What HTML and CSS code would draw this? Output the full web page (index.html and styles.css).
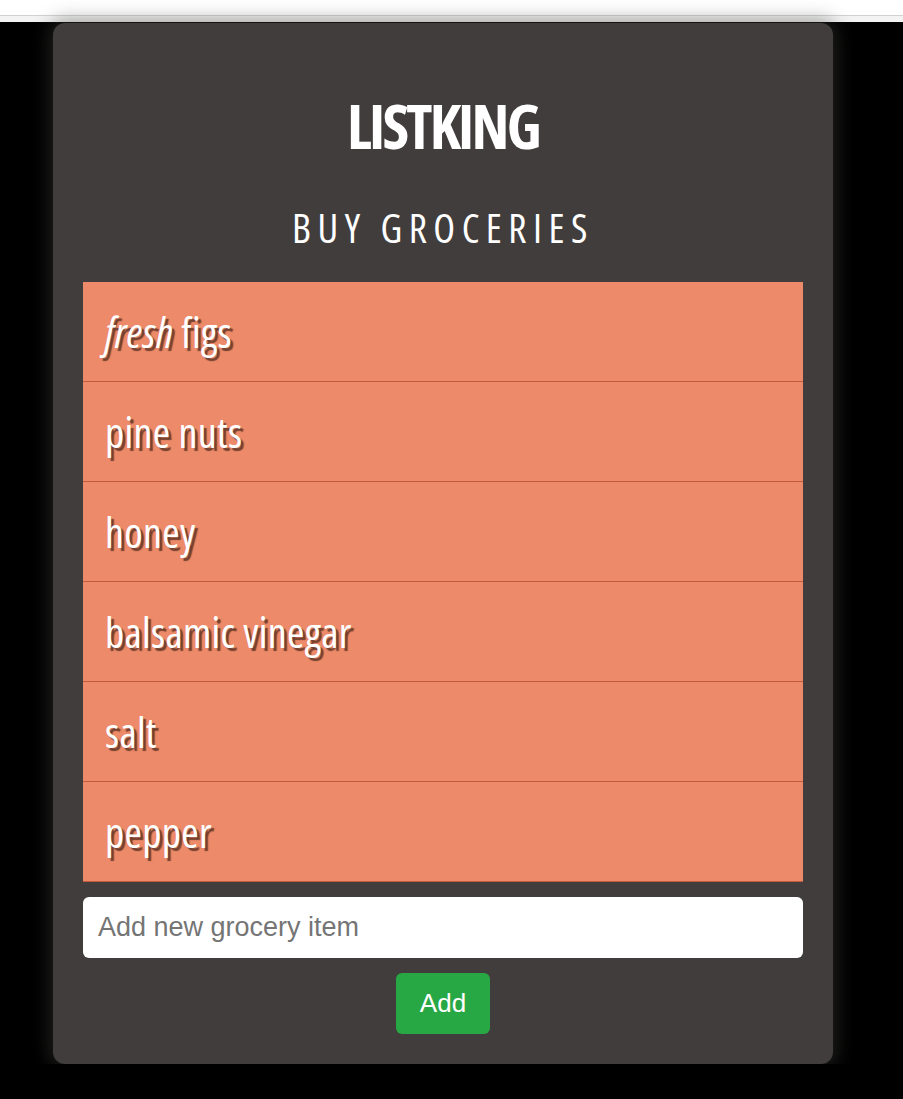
FILE: index.html
```html
<!DOCTYPE html>
<html lang="en">
<head>
    <meta charset="UTF-8">
    <meta name="viewport" content="width=device-width, initial-scale=1.0">
    <title>ListKing</title>
    <link rel="stylesheet" href="styles.css">
</head>
<body>

    <div class="topbar"></div>

    <div class="card">
        <h1 class="title">LISTKING</h1>
        <h2 class="subtitle">BUY GROCERIES</h2>

        <ul class="items">
            <li><em>fresh</em>&nbsp;figs</li>
            <li>pine nuts</li>
            <li>honey</li>
            <li>balsamic vinegar</li>
            <li>salt</li>
            <li>pepper</li>
        </ul>

        <input type="text" class="new-item" placeholder="Add new grocery item">
        <div class="actions">
            <button class="add-btn">Add</button>
        </div>
    </div>

</body>
</html>
```

FILE: styles.css
```css
body {
    margin: 0;
    background-color: #000;
    font-family: "Liberation Sans", Arial, sans-serif;
}
.topbar {
    height: 15px;
    background-color: #fff;
    border-bottom: 1px solid #d2d2d2;
    box-shadow: 0 6px 0 #f3f3f3;
    margin-bottom: 7px;
}
.card {
    width: 780px;
    margin-left: 53px;
    box-sizing: border-box;
    padding: 30px;
    background-color: #413d3c;
    border-radius: 12px;
    box-shadow: 0 0 18px 4px rgba(70, 68, 67, 0.45);
}
.title, .subtitle, .items {
    font-family: "Open Sans", sans-serif;
    font-stretch: 75%;
}
.title {
    margin: 42px 0 0;
    text-align: center;
    color: #fff;
    font-size: 61px;
    line-height: 1;
    font-weight: 700;
    letter-spacing: -2.8px;
}
.subtitle {
    margin: 52px 0 0;
    text-align: center;
    color: #fff;
    font-size: 40px;
    line-height: 1;
    font-weight: 400;
    letter-spacing: 6.5px;
}
.items {
    list-style: none;
    margin: 34px 0 0;
    padding: 0;
}
.items li {
    height: 99px;
    display: flex;
    align-items: center;
    padding-left: 22px;
    background-color: #ec8a69;
    border-bottom: 1px solid #c25a3b;
    color: #fff;
    font-weight: 500;
    font-size: 42px;
    letter-spacing: 0.3px;
    text-shadow: 3px 3px 1px #74402f;
}
.items li em {
    font-style: italic;
}
.new-item {
    display: block;
    width: 100%;
    box-sizing: border-box;
    height: 61px;
    margin-top: 15px;
    padding: 0 15px;
    border: none;
    border-radius: 6px;
    font-family: "Liberation Sans", Arial, sans-serif;
    font-size: 27px;
    color: #333;
}
.new-item::placeholder {
    color: #757575;
}
.actions {
    display: flex;
    justify-content: center;
    margin-top: 15px;
}
.add-btn {
    height: 61px;
    padding: 0 24px;
    border: none;
    border-radius: 6px;
    background-color: #28a745;
    color: #fff;
    font-family: "Liberation Sans", Arial, sans-serif;
    font-size: 26px;
    cursor: pointer;
}
```
